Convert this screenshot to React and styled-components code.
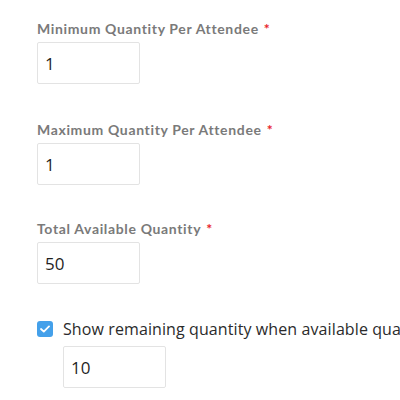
import React from "react";
import styled, { createGlobalStyle } from "styled-components";

const Global = createGlobalStyle`
  html, body { margin: 0; padding: 0; background: #fff; }
  body { font-family: "Lato", "Liberation Sans", sans-serif; }
`;

const Page = styled.div`
  padding: 20px 0 0 37px;
  display: flex;
  flex-direction: column;
  width: 363px;
  overflow: hidden;
  white-space: nowrap;
`;

const Field = styled.div`
  display: flex;
  flex-direction: column;
  gap: 4px;
  margin-bottom: ${(p) => p.$mb || 16}px;
`;

const Label = styled.label`
  font-family: "Lato", "Liberation Sans", sans-serif;
  font-weight: 700;
  font-size: 14px;
  line-height: 18px;
  color: #7a7a7a;
  letter-spacing: 0.65px;
`;

const Star = styled.span`
  color: #e8222a;
  margin-left: 5px;
`;

const Box = styled.div`
  box-sizing: border-box;
  width: 103px;
  height: 42px;
  border: 1px solid #e3e3e3;
  border-radius: 2px;
  display: flex;
  align-items: center;
  padding-left: 7px;
  font-family: "Open Sans", "Liberation Sans", sans-serif;
  font-size: 17px;
  color: #1f1f1f;
  margin-left: ${(p) => p.$indent || 0}px;
`;

const CheckRow = styled.div`
  display: flex;
  align-items: center;
  gap: 10px;
  margin-bottom: 6px;
`;

const Check = styled.span`
  width: 16px;
  height: 16px;
  border-radius: 3px;
  background: #44a0ea;
  display: inline-flex;
  align-items: center;
  justify-content: center;
  flex: none;
`;

const CheckText = styled.span`
  font-family: "Open Sans", "Liberation Sans", sans-serif;
  font-size: 16px;
  letter-spacing: 0.1px;
  color: #2b2b2b;
`;

export default function App() {
  return (
    <>
      <Global />
      <Page>
        <Field $mb={37}>
          <Label>Minimum Quantity Per Attendee<Star>*</Star></Label>
          <Box>1</Box>
        </Field>
        <Field $mb={35}>
          <Label>Maximum Quantity Per Attendee<Star>*</Star></Label>
          <Box>1</Box>
        </Field>
        <Field $mb={34}>
          <Label>Total Available Quantity<Star>*</Star></Label>
          <Box>50</Box>
        </Field>
        <CheckRow>
          <Check>
            <svg width="10" height="8" viewBox="0 0 10 8">
              <path d="M1 4 L3.8 6.6 L9 1.4" fill="none" stroke="#fff" strokeWidth="1.8" strokeLinecap="round" strokeLinejoin="round" />
            </svg>
          </Check>
          <CheckText>Show remaining quantity when available quantity falls below</CheckText>
        </CheckRow>
        <Box $indent={26}>10</Box>
      </Page>
    </>
  );
}
